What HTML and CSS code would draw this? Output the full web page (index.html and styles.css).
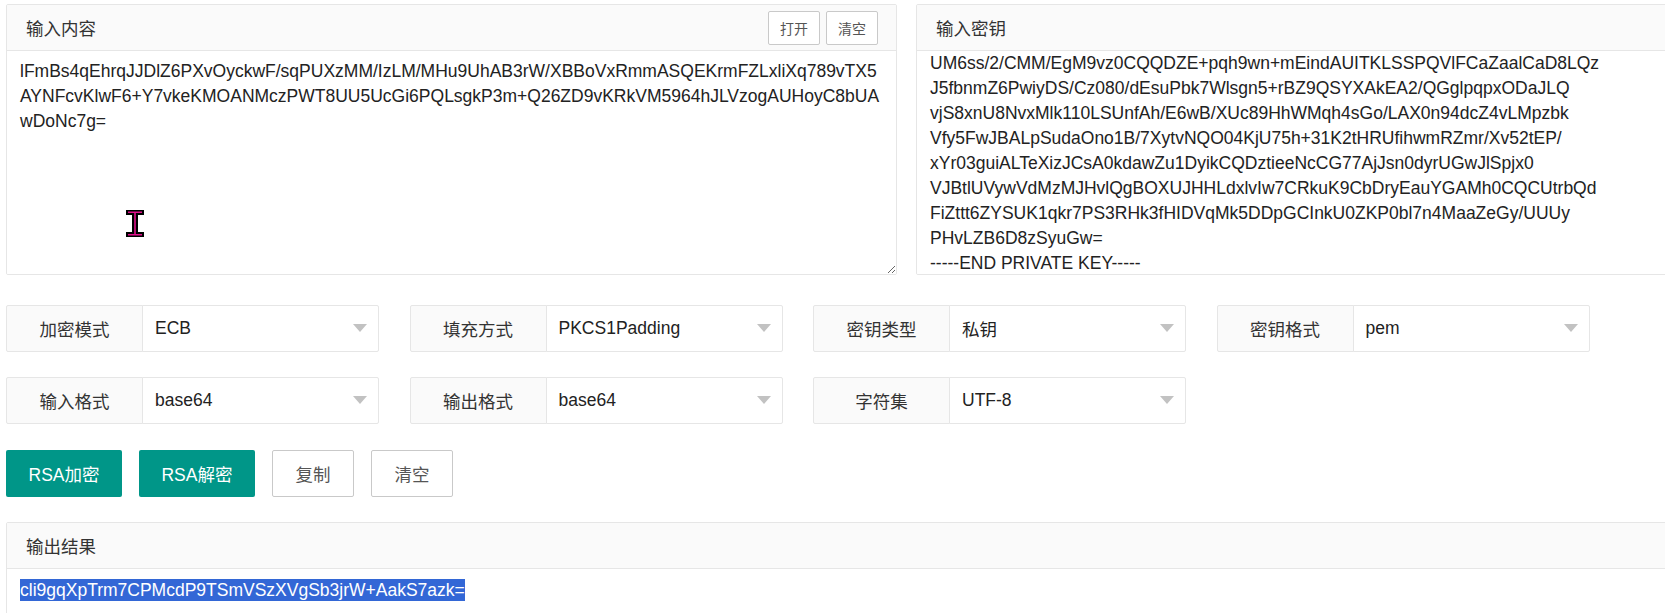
FILE: index.html
```html
<!DOCTYPE html>
<html lang="zh-CN">
<head>
<meta charset="utf-8">
<title>RSA加密解密</title>
<link rel="stylesheet" href="styles.css">
</head>
<body>
<div class="page">
  <div class="top-row">
    <div class="panel panel-input">
      <div class="panel-head">
        <span class="panel-title">输入内容</span>
        <div class="head-actions">
          <button class="btn-sm">打开</button>
          <button class="btn-sm">清空</button>
        </div>
      </div>
      <textarea class="text-box" spellcheck="false">lFmBs4qEhrqJJDlZ6PXvOyckwF/sqPUXzMM/IzLM/MHu9UhAB3rW/XBBoVxRmmASQEKrmFZLxliXq789vTX5
AYNFcvKlwF6+Y7vkeKMOANMczPWT8UU5UcGi6PQLsgkP3m+Q26ZD9vKRkVM5964hJLVzogAUHoyC8bUA
wDoNc7g=</textarea>
      <svg class="ibeam" width="20" height="29" viewBox="0 0 20 29">
        <path d="M1 1H19V6H13V23H19V28H1V23H7V6H1Z" fill="#000"/>
        <path d="M3 3.2H17M10 4V25M3 25.8H17" stroke="#e0108c" stroke-width="1.6" fill="none"/>
      </svg>
    </div>
    <div class="panel panel-key">
      <div class="panel-head">
        <span class="panel-title">输入密钥</span>
      </div>
      <textarea class="text-box key-box" spellcheck="false">UM6ss/2/CMM/EgM9vz0CQQDZE+pqh9wn+mEindAUITKLSSPQVlFCaZaalCaD8LQz
J5fbnmZ6PwiyDS/Cz080/dEsuPbk7Wlsgn5+rBZ9QSYXAkEA2/QGglpqpxODaJLQ
vjS8xnU8NvxMlk110LSUnfAh/E6wB/XUc89HhWMqh4sGo/LAX0n94dcZ4vLMpzbk
Vfy5FwJBALpSudaOno1B/7XytvNQO04KjU75h+31K2tHRUfihwmRZmr/Xv52tEP/
xYr03guiALTeXizJCsA0kdawZu1DyikCQDztieeNcCG77AjJsn0dyrUGwJlSpjx0
VJBtlUVywVdMzMJHvlQgBOXUJHHLdxlvIw7CRkuK9CbDryEauYGAMh0CQCUtrbQd
FiZttt6ZYSUK1qkr7PS3RHk3fHIDVqMk5DDpGCInkU0ZKP0bl7n4MaaZeGy/UUUy
PHvLZB6D8zSyuGw=
-----END PRIVATE KEY-----</textarea>
    </div>
  </div>

  <div class="form-row">
    <div class="field"><label class="field-label">加密模式</label><div class="field-select"><span>ECB</span><i class="caret"></i></div></div>
    <div class="field"><label class="field-label">填充方式</label><div class="field-select"><span>PKCS1Padding</span><i class="caret"></i></div></div>
    <div class="field"><label class="field-label">密钥类型</label><div class="field-select"><span>私钥</span><i class="caret"></i></div></div>
    <div class="field"><label class="field-label">密钥格式</label><div class="field-select"><span>pem</span><i class="caret"></i></div></div>
  </div>

  <div class="form-row">
    <div class="field"><label class="field-label">输入格式</label><div class="field-select"><span>base64</span><i class="caret"></i></div></div>
    <div class="field"><label class="field-label">输出格式</label><div class="field-select"><span>base64</span><i class="caret"></i></div></div>
    <div class="field"><label class="field-label">字符集</label><div class="field-select"><span>UTF-8</span><i class="caret"></i></div></div>
  </div>

  <div class="btn-row">
    <button class="btn btn-primary">RSA加密</button>
    <button class="btn btn-primary">RSA解密</button>
    <button class="btn btn-default">复制</button>
    <button class="btn btn-default">清空</button>
  </div>

  <div class="panel panel-output">
    <div class="panel-head">
      <span class="panel-title">输出结果</span>
    </div>
    <div class="output-body"><span class="selected">cli9gqXpTrm7CPMcdP9TSmVSzXVgSb3jrW+AakS7azk=</span></div>
  </div>
</div>
</body>
</html>
```

FILE: styles.css
```css
html, body {
  margin: 0;
  padding: 0;
  overflow: hidden;
  background: #fff;
}

body {
  font-family: "Liberation Sans", "Noto Sans CJK SC", sans-serif;
  font-size: 17.5px;
  color: #333;
}

.page {
  width: 1801px;
  padding: 4px 0 0 6px;
}

.top-row {
  display: flex;
  gap: 19px;
}

.panel {
  position: relative;
  border: 1px solid #e6e6e6;
  border-radius: 2px;
  background: #fff;
  box-sizing: border-box;
}

.panel-input,
.panel-key {
  width: 891px;
  height: 271px;
  display: flex;
  flex-direction: column;
  overflow: hidden;
}

.panel-head {
  height: 46px;
  flex: none;
  box-sizing: border-box;
  border-bottom: 1px solid #e6e6e6;
  background: #fafafa;
  display: flex;
  align-items: center;
  justify-content: space-between;
  padding: 0 18px 0 19px;
}

.panel-title {
  font-family: "Noto Sans CJK SC", sans-serif;
  font-size: 17.5px;
  color: #333;
}

.head-actions {
  display: flex;
  gap: 6px;
}

.btn-sm {
  width: 52px;
  height: 34px;
  border: 1px solid #c9c9c9;
  border-radius: 2px;
  background: #fff;
  color: #555;
  font-family: "Noto Sans CJK SC", sans-serif;
  font-size: 14px;
  padding: 0;
}

.text-box {
  flex: 1;
  display: block;
  width: 100%;
  box-sizing: border-box;
  border: 0;
  margin: 0;
  padding: 7.5px 13px;
  font-family: "Liberation Sans", "Noto Sans CJK SC", sans-serif;
  font-size: 17.5px;
  line-height: 25px;
  color: #222;
  white-space: pre;
  overflow: hidden;
  outline: none;
  background: #fff;
}

.key-box {
  padding-top: 0;
  resize: none;
}

.ibeam {
  position: absolute;
  left: 118px;
  top: 204px;
}

.form-row {
  display: flex;
  gap: 30.5px;
  margin-top: 30px;
}

.form-row + .form-row {
  margin-top: 25px;
}

.field {
  display: flex;
  width: 373px;
  height: 47px;
}

.field-label {
  width: 137px;
  flex: none;
  box-sizing: border-box;
  border: 1px solid #e6e6e6;
  border-radius: 2px 0 0 2px;
  background: #fafafa;
  display: flex;
  align-items: center;
  justify-content: center;
  font-family: "Noto Sans CJK SC", sans-serif;
  font-size: 17.5px;
  color: #333;
}

.field-select {
  flex: 1;
  margin-left: -1px;
  box-sizing: border-box;
  border: 1px solid #e6e6e6;
  border-radius: 0 2px 2px 0;
  background: #fff;
  display: flex;
  align-items: center;
  justify-content: space-between;
  padding: 0 11px 0 12px;
  font-size: 17.5px;
  color: #222;
}

.caret {
  width: 0;
  height: 0;
  border-left: 7.5px solid transparent;
  border-right: 7.5px solid transparent;
  border-top: 8px solid #c2c2c2;
  margin-top: -2px;
}

.btn-row {
  display: flex;
  gap: 17px;
  margin-top: 26px;
}

.btn {
  height: 47px;
  padding: 0 22.5px;
  border-radius: 2px;
  font-family: "Liberation Sans", "Noto Sans CJK SC", sans-serif;
  font-size: 17.5px;
  cursor: pointer;
}

.btn-primary {
  background: #009688;
  color: #fff;
  border: 0;
}

.btn-default {
  background: #fff;
  color: #555;
  border: 1px solid #c9c9c9;
}

.panel-output {
  margin-top: 25px;
  width: 1801px;
  height: 200px;
}

.output-body {
  padding: 9px 13px;
  font-size: 17.5px;
  line-height: 25px;
}

.selected {
  background: #3367d6;
  color: #fff;
  padding: 1px 0;
}
```
